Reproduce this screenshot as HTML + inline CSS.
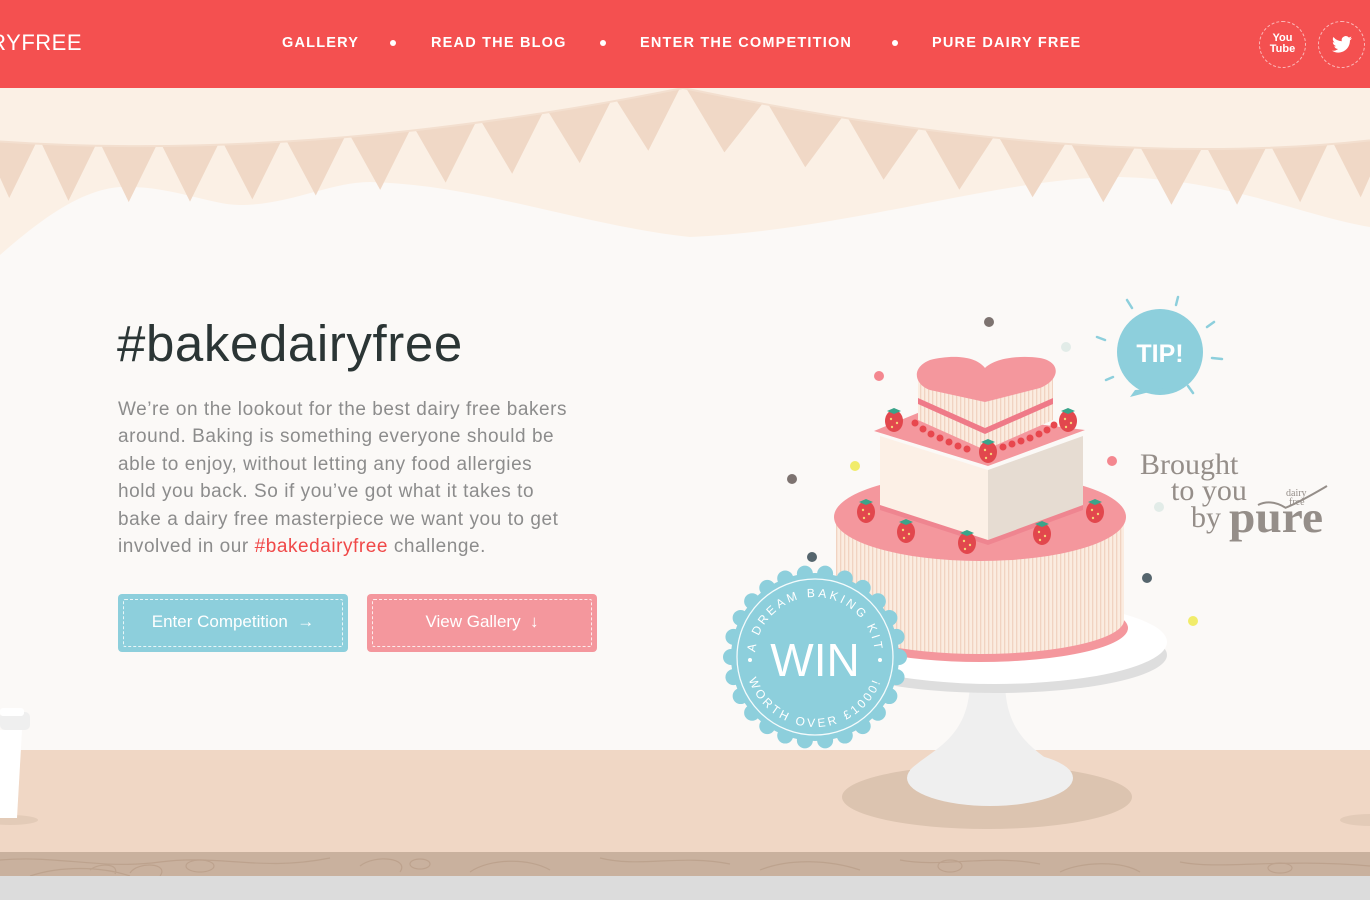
<!DOCTYPE html>
<html><head><meta charset="utf-8"><style>
*{margin:0;padding:0;box-sizing:border-box}
body{width:1370px;height:900px;overflow:hidden;background:#fbf9f7;font-family:"Liberation Sans",sans-serif;position:relative}
.hdr{position:absolute;left:0;top:0;width:1370px;height:88px;background:#f45050;color:#fff}
.logo{position:absolute;right:1288px;top:30px;font-size:22px;letter-spacing:0.5px;white-space:nowrap}
.nav{position:absolute;top:35px;font-size:14.5px;font-weight:bold;letter-spacing:1.2px;white-space:nowrap}
.dot{position:absolute;top:40px;width:6px;height:6px;border-radius:50%;background:#fff}
.soc{position:absolute;top:21px;width:47px;height:47px;border-radius:50%;border:1.5px dashed rgba(255,255,255,.6)}
h1{position:absolute;left:117px;top:314px;font-size:51px;font-weight:normal;color:#2b3535;letter-spacing:0.6px}
.p{position:absolute;left:118px;top:396px;font-size:19px;line-height:27.4px;color:#8c8c8c;white-space:nowrap;letter-spacing:0.55px}
.p span{color:#f04848}
.btn{position:absolute;top:594px;width:230px;height:58px;border-radius:4px;color:#fff;font-size:17px;text-align:center;line-height:56px}
.btn:after{content:"";position:absolute;left:5px;top:5px;right:5px;bottom:5px;border:1.5px dashed rgba(255,255,255,.8);border-radius:2px}
</style></head><body>
<svg width="1370" height="900" style="position:absolute;left:0;top:0">
<rect x="0" y="88" width="1370" height="170" fill="#fbf0e5"/>
<path d="M0,255 C40,220 80,190 120,187 C170,185 210,205 240,205 C290,205 330,182 370,182 C480,185 580,225 690,237 C850,230 1000,177 1120,177 C1230,180 1300,215 1370,227 L1370,760 L0,760 Z" fill="#fbf9f7"/>
<g id="bunt" fill="#f0d8c6"></g>
<rect x="0" y="750" width="1370" height="103" fill="#f0d7c5"/>
<rect x="0" y="852" width="1370" height="24" fill="#c9b19e"/>
<g stroke="#b89c87" stroke-width="1.2" fill="none" opacity=".7">
<path d="M0,860 C60,855 100,870 160,862 S260,872 330,858 M90,870 c10,-8 30,-6 25,4 M130,873 c8,-12 40,-10 30,3 M360,866 c15,-12 50,-8 40,6 M470,872 c20,-14 60,-14 80,-2 M600,858 c40,10 80,-4 130,6 M760,870 c30,-12 70,-10 100,0 M900,860 c40,8 90,-6 140,4 M1060,872 c20,-10 60,-12 80,0 M1180,862 c40,8 100,-4 190,4 M30,876 c30,-10 70,-10 100,0"/>
<ellipse cx="200" cy="866" rx="14" ry="6"/><ellipse cx="420" cy="864" rx="10" ry="5"/><ellipse cx="950" cy="866" rx="12" ry="6"/><ellipse cx="1280" cy="868" rx="12" ry="5"/>
</g>
<rect x="0" y="876" width="1370" height="24" fill="#dcdcdc"/>
<ellipse cx="10" cy="820" rx="28" ry="5" fill="#e3cbb8"/>
<path d="M0,730 L22,730 L17,818 L0,818 Z" fill="#fff"/>
<rect x="0" y="712" width="30" height="18" rx="5" fill="#efefef"/>
<rect x="0" y="708" width="24" height="8" rx="3" fill="#fff"/>
<ellipse cx="1370" cy="820" rx="30" ry="6" fill="#e3cbb8"/>
<ellipse cx="987" cy="797" rx="145" ry="32" fill="#dcc4b0"/>
<path d="M970,680 L1005,680 C1005,740 1040,750 1060,770 C1070,795 910,800 910,770 C930,750 970,740 970,680Z" fill="#efefef"/>
<ellipse cx="990" cy="778" rx="83" ry="28" fill="#efefef"/>
<ellipse cx="995" cy="655" rx="172" ry="38" fill="#dedede"/>
<ellipse cx="995" cy="642" rx="172" ry="42" fill="#fff"/>
<defs><pattern id="st" width="4" height="10" patternUnits="userSpaceOnUse"><rect width="4" height="10" fill="#fbece0"/><rect width="1.3" height="10" fill="#f1d3c1"/></pattern>
<path id="ta" d="M755,657 A60,60 0 0 1 875,657"/><path id="ba" d="M745,657 A70,70 0 0 0 885,657"/></defs>
<ellipse cx="980" cy="628" rx="148" ry="34" fill="#f4979d"/>
<path d="M836,517 L1124,517 L1124,620 A144,34 0 0 1 836,620 Z" fill="url(#st)"/>
<ellipse cx="980" cy="517" rx="146" ry="44" fill="#f4979d"/>
<path d="M880,470 L988,508 L1083,475 L1083,510 L988,545 L880,510Z" fill="#ef8590"/>
<path d="M880,436 L988,470 L988,540 L880,505Z" fill="#fcf0e6"/>
<path d="M988,470 L1083,436 L1083,505 L988,540Z" fill="#e6dcd2"/>
<path d="M874,431 L925,410 L1085,430 L988,466Z" fill="#f4979d"/>
<path d="M918,375 L918,420 L985,450 L1053,420 L1053,375Z" fill="url(#st)"/>
<path d="M918,398 L985,428 L1053,398 L1053,404 L985,434 L918,404Z" fill="#ef7a88"/>
<path d="M985,368 C975,355 950,355 930,360 C910,368 915,385 930,390 L985,402 L1040,388 C1060,380 1062,362 1040,358 C1020,355 995,358 985,368Z" fill="#f4979d"/>
<g fill="#e8474e"><circle cx="915" cy="423" r="3.5"/><circle cx="923" cy="429" r="3.5"/><circle cx="931" cy="434" r="3.5"/><circle cx="940" cy="438" r="3.5"/><circle cx="949" cy="442" r="3.5"/><circle cx="958" cy="446" r="3.5"/><circle cx="967" cy="449" r="3.5"/><circle cx="1003" cy="447" r="3.5"/><circle cx="1012" cy="444" r="3.5"/><circle cx="1021" cy="441" r="3.5"/><circle cx="1030" cy="438" r="3.5"/><circle cx="1039" cy="434" r="3.5"/><circle cx="1047" cy="430" r="3.5"/><circle cx="1054" cy="425" r="3.5"/></g>
<g id="straw"></g>
<circle cx="989" cy="322" r="5" fill="#7d7370"/><circle cx="1066" cy="347" r="5" fill="#e2ece8"/><circle cx="879" cy="376" r="5" fill="#f4878f"/>
<circle cx="855" cy="466" r="5" fill="#f1ec6a"/><circle cx="792" cy="479" r="5" fill="#7d7370"/><circle cx="1112" cy="461" r="5" fill="#f4878f"/>
<circle cx="1159" cy="507" r="5" fill="#e2ece8"/><circle cx="812" cy="557" r="5" fill="#55656d"/><circle cx="1147" cy="578" r="5" fill="#55656d"/><circle cx="1193" cy="621" r="5" fill="#f1ec6a"/>
<g stroke="#8dcfdc" stroke-width="2.5" stroke-linecap="round"><path d="M1127,300 l5,8 M1178,297 l-2,8 M1207,327 l7,-5 M1097,337 l8,3 M1212,358 l10,1 M1113,377 l-7,3 M1188,386 l5,7"/></g>
<circle cx="1160" cy="352" r="43" fill="#8dcfdc"/>
<path d="M1135,390 L1130,397 L1165,388Z" fill="#8dcfdc"/>
<text x="1160" y="362" fill="#fff" font-size="25" font-weight="bold" text-anchor="middle" font-family="Liberation Sans">TIP!</text>
<g font-family="Liberation Serif" fill="#958e89" font-size="30"><text x="1140" y="474">Brought</text><text x="1171" y="500">to you</text><text x="1191" y="527">by</text></g>
<text x="1229" y="532" font-family="Liberation Serif" font-weight="bold" font-size="44" fill="#958e89" textLength="94" lengthAdjust="spacingAndGlyphs">pure</text>
<text x="1286" y="496" font-family="Liberation Serif" font-size="10" fill="#958e89">dairy</text><text x="1289" y="505" font-family="Liberation Serif" font-size="10" fill="#958e89">free</text>
<path d="M1258,505 c10,-5 20,-2 28,3 M1285,508 c15,-6 30,-15 42,-22" stroke="#958e89" stroke-width="2" fill="none"/>
<g id="badge"></g>
<circle cx="815" cy="657" r="78" fill="none" stroke="#fff" stroke-width="1.3" opacity=".9"/>
<text x="815" y="676" text-anchor="middle" fill="#fff" font-size="46" font-family="Liberation Sans">WIN</text>
<g font-size="12" fill="#fff" letter-spacing="3" font-family="Liberation Sans">
<text><textPath href="#ta" startOffset="50%" text-anchor="middle">A DREAM BAKING KIT</textPath></text>
<text><textPath href="#ba" startOffset="50%" text-anchor="middle">WORTH OVER £1000!</textPath></text></g>
<circle cx="750" cy="660" r="2" fill="#fff"/><circle cx="880" cy="660" r="2" fill="#fff"/>
</svg>
<div class="hdr">
<div class="logo">DAIRYFREE</div>
<div class="nav" style="left:282px">GALLERY</div><div class="dot" style="left:390px"></div>
<div class="nav" style="left:431px">READ THE BLOG</div><div class="dot" style="left:600px"></div>
<div class="nav" style="left:640px">ENTER THE COMPETITION</div><div class="dot" style="left:892px"></div>
<div class="nav" style="left:932px">PURE DAIRY FREE</div>
<div class="soc" style="left:1259px"><div style="font-size:11px;font-weight:bold;line-height:11px;text-align:center;margin-top:11px;font-family:'Liberation Sans Narrow','Liberation Sans',sans-serif">You<br>Tube</div></div>
<div class="soc" style="left:1318px"><svg width="20" height="17" viewBox="0 0 24 20" style="position:absolute;left:13px;top:14px"><path fill="#fff" d="M24 2.4a9.8 9.8 0 0 1-2.8.8A4.9 4.9 0 0 0 23.3.4a9.8 9.8 0 0 1-3.1 1.2 4.9 4.9 0 0 0-8.4 4.5A14 14 0 0 1 1.7 1a4.9 4.9 0 0 0 1.5 6.6A4.9 4.9 0 0 1 1 7v.1a4.9 4.9 0 0 0 3.9 4.8 4.9 4.9 0 0 1-2.2.1 4.9 4.9 0 0 0 4.6 3.4A9.9 9.9 0 0 1 0 17.5 14 14 0 0 0 7.5 19.7c9 0 14-7.5 14-14v-.6A10 10 0 0 0 24 2.4z"/></svg></div>
</div>
<h1>#bakedairyfree</h1>
<div class="p">We’re on the lookout for the best dairy free bakers<br>around. Baking is something everyone should be<br>able to enjoy, without letting any food allergies<br>hold you back. So if you’ve got what it takes to<br>bake a dairy free masterpiece we want you to get<br>involved in our <span>#bakedairyfree</span> challenge.</div>
<div class="btn" style="left:118px;background:#8dcfdc">Enter Competition &nbsp;→</div>
<div class="btn" style="left:367px;background:#f4979d">View Gallery &nbsp;↓</div>
<script>
function q(p0,p1,p2,t){return (1-t)*(1-t)*p0+2*(1-t)*t*p1+t*t*p2}
var g=document.getElementById('bunt'),h='';
function swag(x0,y0,cx,cy,x1,y1,n){for(var i=0;i<n;i++){var t0=i/n,t1=(i+1)/n,tm=(t0+t1)/2;
var ax=q(x0,cx,x1,t0),ay=q(y0,cy,y1,t0),bx=q(x0,cx,x1,t1),by=q(y0,cy,y1,t1);
var mx=q(x0,cx,x1,tm),my=q(y0,cy,y1,tm)+56;
h+='<path d="M'+(ax+3)+','+ay+' L'+(bx-3)+','+by+' L'+mx+','+my+'Z"/>';}}
swag(-20,140,300,165,683,88,11);swag(683,88,1100,175,1390,138,10);
g.innerHTML=h+'<path d="M-20,140 Q300,165 683,88 Q1100,175 1390,138" stroke="#f3dfcf" stroke-width="2" fill="none"/>';
var s='',pts=[[894,421],[1068,421],[988,452],[866,512],[906,532],[967,543],[1042,534],[1095,512]];
pts.forEach(function(p){s+='<ellipse cx="'+p[0]+'" cy="'+p[1]+'" rx="9" ry="11" fill="#e2474d"/><path d="M'+(p[0]-7)+','+(p[1]-10)+' l7,3 l7,-3 l-7,-3z" fill="#3aa48a"/><circle cx="'+(p[0]-3)+'" cy="'+(p[1]-2)+'" r="1.2" fill="#f4d27a"/><circle cx="'+(p[0]+3)+'" cy="'+(p[1]+2)+'" r="1.2" fill="#f4d27a"/><circle cx="'+(p[0]-2)+'" cy="'+(p[1]+6)+'" r="1.2" fill="#f4d27a"/>';});
document.getElementById('straw').innerHTML=s;
var b='<circle cx="815" cy="657" r="84" fill="#8dcfdc"/>';
for(var i=0;i<26;i++){var a=i/26*Math.PI*2;b+='<circle cx="'+(815+84*Math.cos(a))+'" cy="'+(657+84*Math.sin(a))+'" r="8" fill="#8dcfdc"/>';}
document.getElementById('badge').innerHTML=b;
</script>
</body></html>
